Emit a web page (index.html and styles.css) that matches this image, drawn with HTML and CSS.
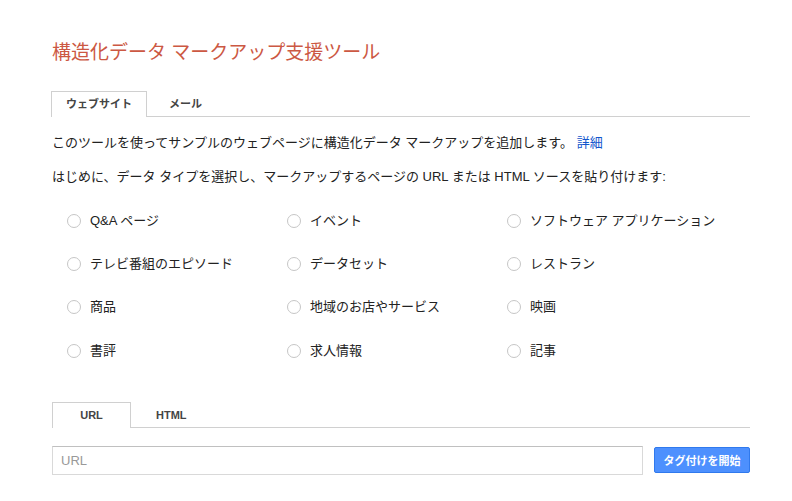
FILE: index.html
```html
<!DOCTYPE html>
<html lang="ja">
<head>
<meta charset="utf-8">
<title>構造化データ マークアップ支援ツール</title>
<link rel="stylesheet" href="styles.css">
</head>
<body>
<div class="page">
  <h1 class="title">構造化データ マークアップ支援ツール</h1>
  <ul class="tabs top-tabs">
    <li class="tab active">ウェブサイト</li>
    <li class="tab second">メール</li>
  </ul>
  <p class="intro">このツールを使ってサンプルのウェブページに構造化データ マークアップを追加します。 <a class="link" href="#">詳細</a></p>
  <p class="intro second-line">はじめに、データ タイプを選択し、マークアップするページの URL または HTML ソースを貼り付けます:</p>
  <div class="types">
    <label class="type"><span class="radio"></span><span class="label">Q&amp;A ページ</span></label>
    <label class="type"><span class="radio"></span><span class="label">イベント</span></label>
    <label class="type"><span class="radio"></span><span class="label">ソフトウェア アプリケーション</span></label>
    <label class="type"><span class="radio"></span><span class="label">テレビ番組のエピソード</span></label>
    <label class="type"><span class="radio"></span><span class="label">データセット</span></label>
    <label class="type"><span class="radio"></span><span class="label">レストラン</span></label>
    <label class="type"><span class="radio"></span><span class="label">商品</span></label>
    <label class="type"><span class="radio"></span><span class="label">地域のお店やサービス</span></label>
    <label class="type"><span class="radio"></span><span class="label">映画</span></label>
    <label class="type"><span class="radio"></span><span class="label">書評</span></label>
    <label class="type"><span class="radio"></span><span class="label">求人情報</span></label>
    <label class="type"><span class="radio"></span><span class="label">記事</span></label>
  </div>
  <ul class="tabs bottom-tabs">
    <li class="tab active latin">URL</li>
    <li class="tab latin second-b">HTML</li>
  </ul>
  <div class="url-row">
    <div class="input"><span class="placeholder">URL</span></div>
    <button class="start">タグ付けを開始</button>
  </div>
</div>
</body>
</html>
```
FILE: styles.css
```css
html, body {
  margin: 0;
  padding: 0;
  background: #fff;
}
body {
  font-family: "Liberation Sans", "Noto Sans CJK JP", sans-serif;
  font-size: 13px;
  color: #222;
}
.page {
  width: 698px;
  padding: 40px 0 0 52px;
}
.title {
  margin: 0;
  font-size: 19px;
  line-height: 26px;
  font-weight: normal;
  color: #cc5843;
}
.tabs {
  list-style: none;
  margin: 0;
  padding: 0;
  display: flex;
  border-bottom: 1px solid #d0d0d0;
  height: 25px;
}
.top-tabs {
  margin-top: 25px;
}
.tab {
  height: 25px;
  box-sizing: border-box;
  line-height: 24px;
  font-size: 11px;
  font-weight: bold;
  color: #444;
  text-align: center;
  border: 1px solid transparent;
  border-bottom: none;
}
.top-tabs .tab.active {
  width: 96px;
  margin-left: -1px;
}
.tab.active {
  border-color: #d0d0d0;
  background: #fff;
  height: 26px;
}
.tab.second {
  padding-left: 21px;
}
.latin {
  font-family: "Liberation Sans", Arial, sans-serif;
}
.intro {
  margin: 17px 0 0;
  line-height: 18px;
}
.second-line {
  margin-top: 16px;
}
.link {
  color: #1155cc;
  text-decoration: none;
}
.types {
  display: grid;
  grid-template-columns: 220px 220px 220px;
  grid-auto-rows: 43.4px;
  margin: 13px 0 0 15px;
}
.type {
  display: flex;
  align-items: center;
}
.radio {
  width: 14px;
  height: 14px;
  box-sizing: border-box;
  border: 1px solid #c6c6c6;
  border-radius: 50%;
  background: #fff;
  flex: none;
}
.label {
  margin-left: 9px;
  line-height: 18px;
}
.bottom-tabs {
  margin-top: 29px;
}
.bottom-tabs .tab.active {
  width: 79px;
}
.second-b {
  padding-left: 24px;
}
.url-row {
  display: flex;
  align-items: center;
  margin-top: 18px;
}
.input {
  width: 591px;
  height: 29px;
  box-sizing: border-box;
  border: 1px solid #d9d9d9;
  border-top-color: #c0c0c0;
  display: flex;
  align-items: center;
  padding-left: 8px;
}
.placeholder {
  color: #999;
  font-size: 13px;
}
.start {
  margin-left: 11px;
  width: 96px;
  height: 26px;
  box-sizing: border-box;
  border: 1px solid #3079ed;
  border-radius: 2px;
  background: #4d90fe;
  color: #fff;
  font-family: "Liberation Sans", "Noto Sans CJK JP", sans-serif;
  font-size: 11px;
  font-weight: bold;
  padding: 0;
}
```
